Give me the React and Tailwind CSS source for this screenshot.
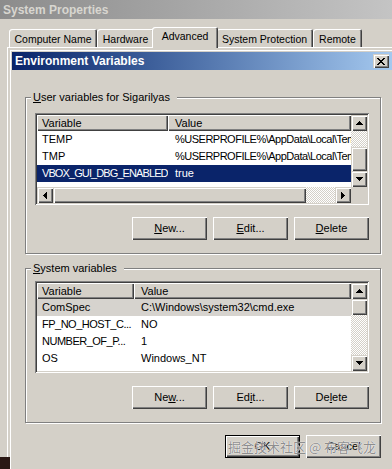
const raised = 'bg-[#d4d0c8] shadow-[inset_1px_1px_0_#ffffff,inset_-1px_-1px_0_#404040,inset_-2px_-2px_0_#808080]'
const scrollBtn = 'bg-[#d4d0c8] shadow-[inset_1px_1px_0_#d4d0c8,inset_2px_2px_0_#ffffff,inset_-1px_-1px_0_#404040,inset_-2px_-2px_0_#808080]'
const checker = 'bg-[image:repeating-conic-gradient(#d4d0c8_0_25%,#ffffff_0_50%)] bg-[length:2px_2px]'

function Arrow({ dir }) {
  // pixel triangles, 7x4 or 4x7
  const rows = [[3, 1], [2, 3], [1, 5], [0, 7]]
  if (dir === 'up' || dir === 'down') {
    return (
      <svg width="7" height="4" shapeRendering="crispEdges">
        {rows.map(([x, w], i) => (
          <rect key={i} x={x} y={dir === 'up' ? i : 3 - i} width={w} height="1" fill="#000" />
        ))}
      </svg>
    )
  }
  return (
    <svg width="4" height="7" shapeRendering="crispEdges">
      {rows.map(([y, h], i) => (
        <rect key={i} y={y} x={dir === 'left' ? i : 3 - i} height={h} width="1" fill="#000" />
      ))}
    </svg>
  )
}

function ScrollBtn({ dir }) {
  return (
    <div className={`w-[16px] h-[16px] shrink-0 flex items-center justify-center ${scrollBtn}`}>
      <Arrow dir={dir} />
    </div>
  )
}

function VScroll({ before, thumb }) {
  return (
    <div className="w-[16px] shrink-0 flex flex-col">
      <ScrollBtn dir="up" />
      <div className={`shrink-0 ${checker}`} style={{ height: before }} />
      <div className={`shrink-0 w-[16px] ${scrollBtn}`} style={{ height: thumb }} />
      <div className={`flex-1 ${checker}`} />
      <ScrollBtn dir="down" />
    </div>
  )
}

function ListView({ col1, rows }) {
  return (
    <div className="w-[334px] h-[92px] p-[2px] bg-white flex flex-col shadow-[inset_1px_1px_0_#808080,inset_-1px_-1px_0_#ffffff,inset_2px_2px_0_#404040,inset_-2px_-2px_0_#d4d0c8]">
      <div className="flex flex-1 min-h-0">
        <div className="flex-1 min-w-0 overflow-hidden flex flex-col">
          <div className="h-[16px] shrink-0 flex">
            <div className={`h-full shrink-0 flex items-center pl-[5px] ${raised}`} style={{ width: col1 }}>
              Variable
            </div>
            <div className={`h-full flex-1 flex items-center pl-[7px] ${raised}`}>Value</div>
          </div>
          {rows.map((r) => (
            <div
              key={r.name}
              className={`h-[17px] shrink-0 flex items-center whitespace-nowrap ${
                r.sel === 'focus' ? 'bg-[#0a246a] text-white' : r.sel === 'blur' ? 'bg-[#d6d3ce]' : ''
              }`}
            >
              <div className="shrink-0 overflow-hidden pl-[5px]" style={{ width: col1 }}>
                <span className={r.tight || ''}>{r.name}</span>
              </div>
              <div className="flex-1 overflow-hidden pl-[7px]">
                <span className={r.vtight || ''}>{r.value}</span>
              </div>
            </div>
          ))}
        </div>
        {col1 > 100 ? <VScroll before={16} thumb={24} /> : <VScroll before={0} thumb={16} />}
      </div>
      {col1 > 100 && (
        <div className="h-[16px] shrink-0 flex">
          <ScrollBtn dir="left" />
          <div className={`w-[253px] shrink-0 ${scrollBtn}`} />
          <div className={`flex-1 ${checker}`} />
          <ScrollBtn dir="right" />
          <div className="w-[16px] shrink-0 bg-[#d4d0c8]" />
        </div>
      )}
    </div>
  )
}

function Btn({ children, isDefault }) {
  if (isDefault) {
    return (
      <div className="w-[75px] h-[23px] border border-black">
        <div className={`w-full h-full flex items-center justify-center ${raised}`}>{children}</div>
      </div>
    )
  }
  return <div className={`w-[75px] h-[23px] flex items-center justify-center ${raised}`}>{children}</div>
}

function Group({ label, mt, pt, children }) {
  return (
    <fieldset
      className={`w-[356px] ml-[13px] ${mt} ${pt} pb-[13px] pl-[9px] pr-[11px] border border-[#808080] shadow-[inset_1px_1px_0_#ffffff,1px_1px_0_#ffffff]`}
    >
      <legend className="-ml-[4px] pl-[2px] pr-[7px] leading-[13px] bg-[#d4d0c8]">{label}</legend>
      {children}
    </fieldset>
  )
}

const userRows = [
  { name: 'TEMP', value: '%USERPROFILE%\\AppData\\Local\\Temp', vtight: 'tracking-[-0.5px]' },
  { name: 'TMP', value: '%USERPROFILE%\\AppData\\Local\\Temp', vtight: 'tracking-[-0.5px]' },
  { name: 'VBOX_GUI_DBG_ENABLED', value: 'true', sel: 'focus', tight: 'tracking-[-0.9px]' },
]

const sysRows = [
  { name: 'ComSpec', value: 'C:\\Windows\\system32\\cmd.exe', sel: 'blur' },
  { name: 'FP_NO_HOST_C...', value: 'NO', tight: 'tracking-[-0.5px]' },
  { name: 'NUMBER_OF_P...', value: '1', tight: 'tracking-[-0.5px]' },
  { name: 'OS', value: 'Windows_NT' },
  { name: 'Path', value: 'C:\\Windows\\system32;C:\\Windows;C:\\Windows\\System32\\Wbem' },
]

export default function App() {
  return (
    <div className="relative w-[392px] h-[469px] overflow-hidden bg-[#d4d0c8] flex flex-col font-['Liberation_Sans',Arial,sans-serif] text-[11px] text-black">
      {/* back window title */}
      <div className="h-[19px] shrink-0 flex items-center pl-[3px] bg-linear-to-r from-[#8c8c8c] to-[#c4c4c4] text-[#d8d6d0] text-[12px] font-bold">
        System Properties
      </div>

      <div className="h-[28px] shrink-0 flex items-end pl-[9px]">
        {[
          ['Computer Name', 'w-[88px]'],
          ['Hardware', 'w-[57px]'],
          ['Advanced', 'w-[66px]', true],
          ['System Protection', 'w-[97px]'],
          ['Remote', 'w-[49px]'],
        ].map(([t, w, sel]) => (
          <div
            key={t}
            className={`${w} shrink-0 flex justify-center rounded-tl-[3px] rounded-tr-[2px] shadow-[inset_1px_1px_0_#ffffff,inset_-1px_0_0_#404040,inset_-2px_0_0_#808080] ${
              sel ? 'h-[21px] -mx-[2px] -mb-[1px] pt-[3px] relative z-10 bg-[#d4d0c8]' : 'h-[18px] pt-[4px]'
            }`}
          >
            <span className="text-[10.5px] leading-[12px]">{t}</span>
          </div>
        ))}
      </div>

      <div className="flex-1 ml-[7px] border-l border-t border-white pt-[1px] pl-[1px]">
        <div className="w-[388px] h-[500px] p-[3px] bg-[#d4d0c8] shadow-[inset_1px_1px_0_#d4d0c8,inset_2px_2px_0_#ffffff]">
          <div className="h-[18px] flex items-center justify-between pl-[3px] pr-[5px] bg-linear-to-r from-[#0a246a] to-[#a6caf0] text-white text-[12px] font-bold">
            <span>Environment Variables</span>
            <div className={`w-[16px] h-[14px] flex items-center justify-center ${scrollBtn}`}>
              <svg width="8" height="7" shapeRendering="crispEdges">
                <path d="M0 0h2v1h-2zM6 0h2v1h-2zM1 1h2v1h-2zM5 1h2v1h-2zM2 2h4v1h-4zM3 3h2v1h-2zM2 4h4v1h-4zM1 5h2v1h-2zM5 5h2v1h-2zM0 6h2v1h-2zM6 6h2v1h-2z" fill="#000" />
              </svg>
            </div>
          </div>

          <Group
            label={<><span className="underline">U</span>ser variables for Sigarilyas</>}
            mt="mt-[21px]"
            pt="pt-[9px]"
          >
            <ListView col1={131} rows={userRows} />
            <div className="flex justify-end gap-[6px] mt-[12px]">
              <Btn><span><span className="underline">N</span>ew...</span></Btn>
              <Btn><span><span className="underline">E</span>dit...</span></Btn>
              <Btn><span><span className="underline">D</span>elete</span></Btn>
            </div>
          </Group>

          <Group label={<><span className="underline">S</span>ystem variables</>} mt="mt-[8px]" pt="pt-[6px]">
            <ListView col1={97} rows={sysRows} />
            <div className="flex justify-end gap-[6px] mt-[13px]">
              <Btn><span>Ne<span className="underline">w</span>...</span></Btn>
              <Btn><span>Ed<span className="underline">i</span>t...</span></Btn>
              <Btn><span>De<span className="underline">l</span>ete</span></Btn>
            </div>
          </Group>

          <div className="relative w-[356px] ml-[13px] mt-[12px] flex justify-end gap-[6px]">
            <Btn isDefault>OK</Btn>
            <Btn>Cancel</Btn>
            <div className="absolute left-[203px] top-[3px] whitespace-nowrap text-[13px] leading-[17px] text-[#8e8e8e] font-['Noto_Sans_CJK_SC',sans-serif] [text-shadow:0_0_1px_#ffffff,0_0_1px_#ffffff]">
              掘金技术社区 @ 布客飞龙
            </div>
          </div>
        </div>
      </div>

      <div className="absolute left-0 bottom-0 w-[10px] h-[12px] bg-[#2a1814]" />
    </div>
  )
}
